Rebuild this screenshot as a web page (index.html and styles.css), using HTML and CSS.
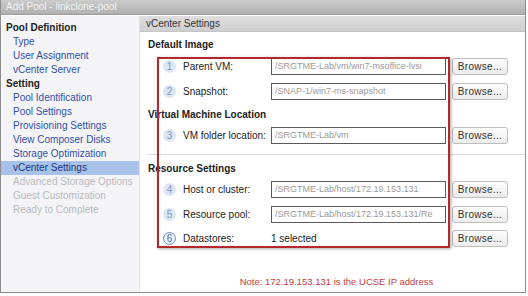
FILE: index.html
```html
<!DOCTYPE html>
<html lang="en">
<head>
<meta charset="utf-8">
<title>Add Pool - linkclone-pool</title>
<link rel="stylesheet" href="styles.css">
</head>
<body>
<div class="window">
	<div class="titlebar">Add Pool - linkclone-pool</div>
	<div class="main">
		<div class="sidebar">
			<div class="group">Pool Definition</div>
			<div class="step">Type</div>
			<div class="step">User Assignment</div>
			<div class="step">vCenter Server</div>
			<div class="group">Setting</div>
			<div class="step">Pool Identification</div>
			<div class="step">Pool Settings</div>
			<div class="step">Provisioning Settings</div>
			<div class="step">View Composer Disks</div>
			<div class="step">Storage Optimization</div>
			<div class="step current">vCenter Settings</div>
			<div class="step off">Advanced Storage Options</div>
			<div class="step off">Guest Customization</div>
			<div class="step off">Ready to Complete</div>
		</div>
		<div class="content">
			<div class="pane_header">vCenter Settings</div>

			<div class="heading h_first">Default Image</div>
			<div class="row r_first">
				<span class="num">1</span><span class="label">Parent VM:</span>
				<span class="field">/SRGTME-Lab/vm/win7-msoffice-lvsi</span>
				<span class="browse">Browse...</span>
			</div>
			<div class="row">
				<span class="num">2</span><span class="label">Snapshot:</span>
				<span class="field">/SNAP-1/win7-ms-snapshot</span>
				<span class="browse">Browse...</span>
			</div>

			<div class="heading">Virtual Machine Location</div>
			<div class="row r_tight">
				<span class="num">3</span><span class="label">VM folder location:</span>
				<span class="field">/SRGTME-Lab/vm</span>
				<span class="browse">Browse...</span>
			</div>

			<div class="sep"></div>

			<div class="heading h_after_sep">Resource Settings</div>
			<div class="row r_tight">
				<span class="num">4</span><span class="label">Host or cluster:</span>
				<span class="field">/SRGTME-Lab/host/172.19.153.131</span>
				<span class="browse">Browse...</span>
			</div>
			<div class="row">
				<span class="num">5</span><span class="label">Resource pool:</span>
				<span class="field">/SRGTME-Lab/host/172.19.153.131/Re</span>
				<span class="browse">Browse...</span>
			</div>
			<div class="row r_last">
				<span class="num focus">6</span><span class="label">Datastores:</span>
				<span class="value">1 selected</span>
				<span class="browse">Browse...</span>
			</div>

			<div class="note">Note: 172.19.153.131 is the UCSE IP address</div>
		</div>
	</div>
	<div class="redbox"></div>
</div>
</body>
</html>
```

FILE: styles.css
```css
body {
	margin: 0;
	background: #fff;
	font-family: "Liberation Sans", Arial, sans-serif;
	font-size: 10px;
}

.window {
	position: relative;
	width: 526px;
	height: 293px;
	border: 1px solid #8c8c8c;
	border-top: 0;
	box-sizing: border-box;
	display: flex;
	flex-direction: column;
	background: #fff;
}

.titlebar {
	height: 14px;
	line-height: 13px;
	padding-left: 5px;
	color: #f2f2f2;
	font-size: 10px;
	background: linear-gradient(#cbcbcb, #b1b1b1);
	border-bottom: 1px solid #9a9a9a;
}

.main {
	flex: 1;
	display: flex;
	border-top: 1px solid #fff;
}

/* left wizard steps */
.sidebar {
	width: 139px;
	background: #f4f4f7;
	padding-top: 5px;
	border-right: 1px solid #e2e2e6;
	box-sizing: border-box;
}
.group {
	line-height: 14px;
	padding-left: 5px;
	font-weight: bold;
	color: #222;
}
.step {
	line-height: 14px;
	padding-left: 12px;
	color: #3150a6;
}
.step.current {
	background: #a9c2ea;
	color: #1b3478;
}
.step.off {
	color: #b9b9bd;
}

/* right pane */
.content {
	flex: 1;
	display: flex;
	flex-direction: column;
}
.pane_header {
	height: 15px;
	line-height: 15px;
	padding-left: 6px;
	color: #333;
	background: linear-gradient(#dedede, #cfcfcf);
	border-bottom: 1px solid #c4c4c4;
}
.heading {
	font-weight: bold;
	color: #222;
	padding-left: 8px;
	line-height: 14px;
	margin-top: 8px;
}
.heading.h_first {
	margin-top: 6px;
}
.heading.h_after_sep {
	margin-top: 7px;
}
.row {
	display: flex;
	align-items: center;
	height: 17px;
	margin-top: 8px;
	color: #222;
}
.row.r_first {
	margin-top: 6px;
}
.row.r_tight {
	margin-top: 5px;
}
.row.r_last {
	margin-top: 7px;
}
.num {
	width: 13px;
	height: 13px;
	margin-left: 23px;
	border-radius: 50%;
	background: #dde5f1;
	color: #7e9ac4;
	font-size: 10px;
	line-height: 13px;
	text-align: center;
	box-sizing: border-box;
}
.num.focus {
	border: 1px solid #6a8cc2;
	background: #eef3fa;
	color: #4a6fa8;
	line-height: 11px;
}
.label {
	width: 88px;
	margin-left: 7px;
}
.field {
	width: 175px;
	height: 17px;
	line-height: 15px;
	box-sizing: border-box;
	border: 1px solid #5a5a5a;
	padding-left: 3px;
	color: #9a9a9a;
	font-size: 9px;
	overflow: hidden;
	white-space: nowrap;
}
.value {
	width: 175px;
	box-sizing: border-box;
}
.browse {
	margin-left: 6px;
	width: 56px;
	height: 17px;
	line-height: 15px;
	box-sizing: border-box;
	border: 1px solid #bdbdbd;
	border-radius: 3px;
	background: linear-gradient(#fdfdfd, #ececec);
	text-align: center;
	color: #333;
	letter-spacing: 0.3px;
}
.sep {
	height: 1px;
	margin: 10px 0 0 8px;
	background: #dcdcdc;
}
.note {
	margin-top: auto;
	margin-bottom: 5px;
	text-align: center;
	color: #c0413c;
	font-size: 9.5px;
	padding-left: 8px;
}

/* highlight frame drawn over the fields */
.redbox {
	position: absolute;
	left: 156px;
	top: 57px;
	width: 293px;
	height: 191px;
	border: 2px solid #b4282b;
	box-sizing: border-box;
	box-shadow: 1px 1px 3px rgba(0, 0, 0, 0.35);
}
```
